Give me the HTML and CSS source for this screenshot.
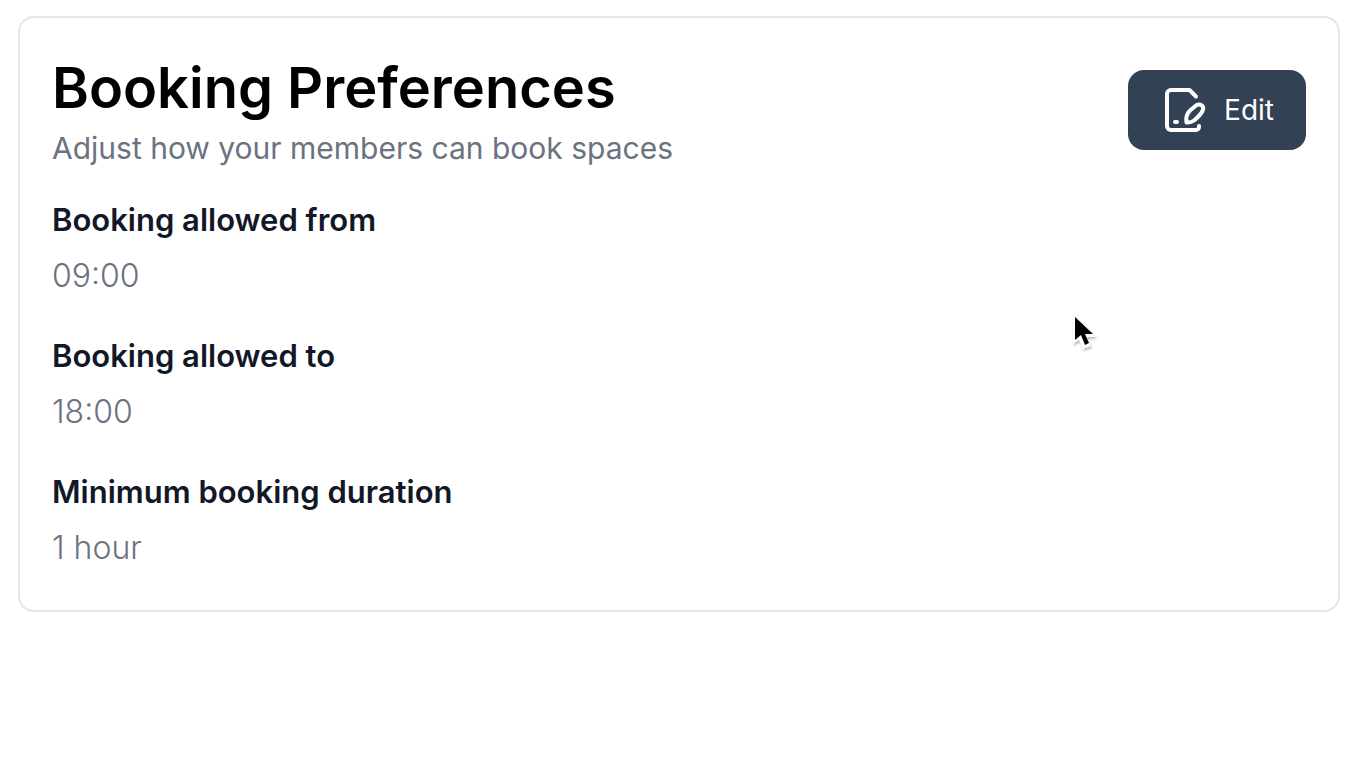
FILE: index.html
```html
<!DOCTYPE html>
<html lang="en">
<head>
<meta charset="utf-8">
<meta name="viewport" content="width=device-width, initial-scale=1">
<title>Booking Preferences</title>
<link rel="stylesheet" href="styles.css">
</head>
<body>
<main class="card">
  <header class="card-header">
    <div class="heading">
      <h1 class="title">Booking Preferences</h1>
      <p class="subtitle">Adjust how your members can book spaces</p>
    </div>
    <button class="edit-button" type="button">
      <svg class="edit-icon" viewBox="0 0 48 48" fill="none" stroke="currentColor" stroke-width="4" stroke-linecap="round" stroke-linejoin="round" aria-hidden="true">
        <path d="M36 10.500L29.500 4H11a4 4 0 0 0-4 4v32a4 4 0 0 0 4 4h25a3 3 0 0 0 3-3v-1"/>
        <path d="M15 36h2"/>
        <path d="M26.500 36.500C25.500 31 27 27.500 30 24.500L36 19.500C40 17 45 20 42.500 25C41 28 37 32 34 34.500C31.500 36.300 29 36.800 26.500 36.500Z"/>
      </svg>
      Edit
    </button>
  </header>
  <dl class="settings">
    <div class="setting"><dt class="label">Booking allowed from</dt><dd class="value">09:00</dd></div>
    <div class="setting"><dt class="label">Booking allowed to</dt><dd class="value">18:00</dd></div>
    <div class="setting"><dt class="label">Minimum booking duration</dt><dd class="value">1 hour</dd></div>
  </dl>
</main>
<svg class="pointer" viewBox="0 0 28 40" aria-hidden="true">
  <path d="M3 2v30l6-4 4 9 8-3-4-9h9z" fill="#fff"/>
  <path d="M5 5v23l6-5 4 10 4-2-4-9h8z" fill="#000"/>
</svg>
</body>
</html>
```

FILE: styles.css
```css
* { box-sizing: border-box; }

body {
  margin: 16px 20px 16px 18px;
  background: #fff;
  color: #000;
  font-family: Inter, "Liberation Sans", sans-serif;
  font-size: 32px;
  line-height: 40px;
}

.card {
  padding: 32px 32px 10px;
  border: 2px solid #e5e5e7;
  border-radius: 16px;
}

.card-header {
  display: flex;
  align-items: center;
  justify-content: space-between;
  gap: 32px;
}

.title, .subtitle, .settings, .value { margin: 0; }

.title {
  font-size: 56px;
  font-weight: 600;
  line-height: 76px;
}

.subtitle {
  color: #6b7280;
  font-size: 30px;
  line-height: 44px;
}

.edit-button {
  display: flex;
  align-items: center;
  gap: 16px;
  height: 80px;
  padding: 0 32px;
  border: 0;
  border-radius: 16px;
  background: #334155;
  color: #fff;
  font: inherit;
  font-size: 28px;
  cursor: pointer;
}

.edit-icon {
  width: 48px;
  height: 48px;
}

.settings {
  display: grid;
  gap: 40px;
  padding: 30px 0 32px;
}

.setting {
  display: grid;
  gap: 16px;
}

.label {
  color: #111827;
  font-size: 31px;
  font-weight: 600;
}

.value {
  color: #6b7280;
  font-weight: 300;
}

.pointer {
  position: absolute;
  top: 312px;
  left: 1070px;
  width: 28px;
  height: 40px;
  filter: drop-shadow(1px 2px 1px #0004);
  pointer-events: none;
}
```
